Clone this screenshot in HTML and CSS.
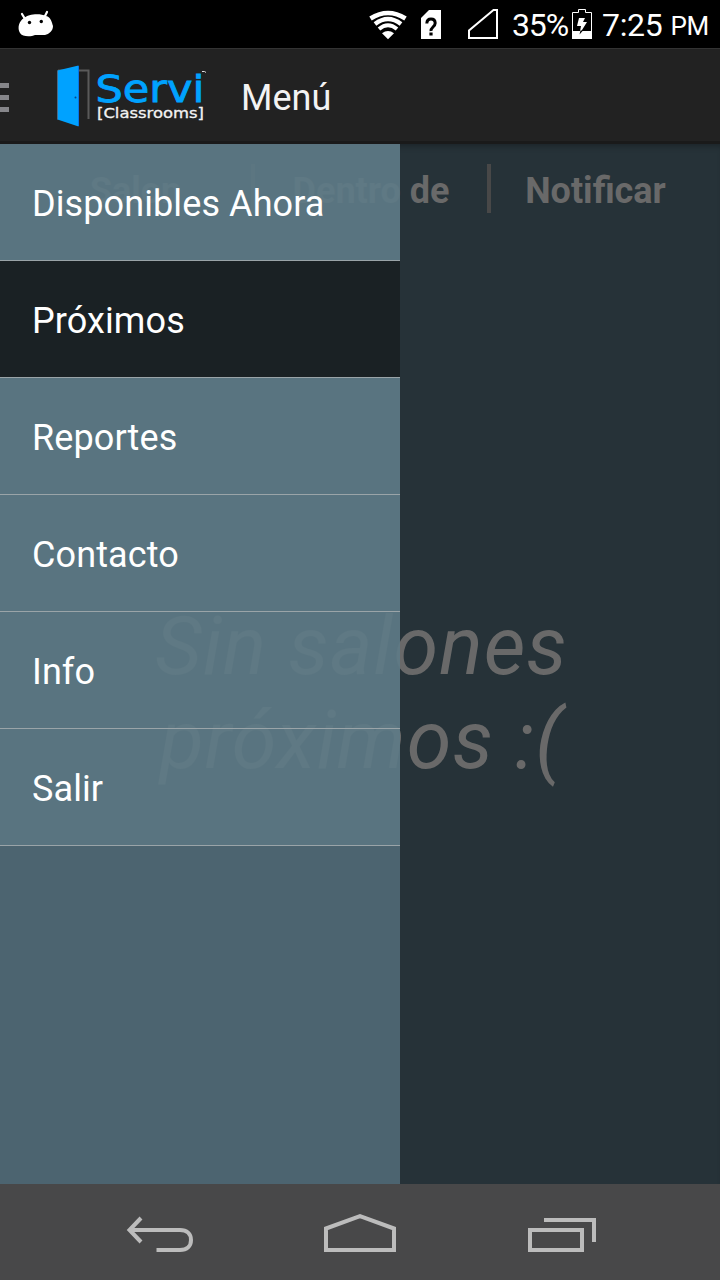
FILE: index.html
```
<!DOCTYPE html>
<html lang="es">
<head>
<meta charset="utf-8">
<title>Menú</title>
<link rel="stylesheet" href="styles.css">
</head>
<body>
<div class="screen">
  <div class="status">
    <svg class="status-icon" width="40" height="48" viewBox="0 0 40 48">
      <path d="M5 14l3 5M30 12l-3 6" stroke="#fff" stroke-width="2.2" stroke-linecap="round"/>
      <path d="M7 18C11 14 23 13 29 16C34 17 35 23 36 26C36 31 32 34 28 35L18 35C14 37 5 37 3 33C0 28 2 21 7 18Z" fill="#fff"/>
      <circle cx="12.500" cy="22.500" r="1.700"/><circle cx="24.300" cy="21.500" r="1.700"/>
    </svg>
    <div class="status-right">
      <svg class="status-icon" width="135" height="48" viewBox="0 0 135 48">
        <g fill="none" stroke="#fff" stroke-width="4.600">
          <path d="M5.500 18.500Q23 7.500 40.500 18.500"/>
          <path d="M10 24Q23 14 36 24" stroke-width="4.400"/>
          <path d="M14 29Q23 21.500 32 29" stroke-width="4"/>
        </g>
        <path d="M17 33.300Q23 28.500 29 33.300L23 39.200Z" fill="#fff"/>
        <path d="M64 10H76V39H56V18Z" fill="#fff"/>
        <path d="M61.800 23.500Q62 19 66 19T70.200 23Q70.200 25 68 27T66 31" fill="none" stroke="#000" stroke-width="3"/>
        <rect x="64.400" y="32.500" width="3.200" height="3"/>
        <path d="M104 38V30.500L128.500 10H132V38Z" fill="none" stroke="#fff" stroke-width="2"/>
      </svg>
      <span class="percent">35%</span>
      <svg class="status-icon" width="22" height="48" viewBox="0 0 22 48">
        <path d="M1.500 12.500H7.500V9.500H14.500V12.500H20.500V38.500H1.500Z" fill="none" stroke="#fff"/>
        <path d="M1 31H21V39H1Z" fill="#fff"/>
        <path d="M8 18H14L12 22H16L8.500 34L10 26H6Z" fill="#fff"/>
        <path d="M12 30.500L8.500 34.500L9.500 30.500Z" fill="#000"/>
      </svg>
      <span class="time">7:25</span><span class="pm">PM</span>
    </div>
  </div>
  <div class="bar">
    <div class="burger"><i></i><i></i><i></i></div>
    <svg class="logo" width="156" height="70" viewBox="54 62 156 70">
      <path d="M58 70.500H88.500V119" fill="none" stroke="#5a5a5a" stroke-width="2"/>
      <path d="M57.500 70.500L78.500 65.500V126.500L57.500 119.500Z" fill="#00a2ff"/>
      <path d="M57.500 70.500V119.500" stroke="#4b6b88"/>
      <path d="M78.500 66V126" stroke="#0876e8"/>
      <circle cx="75.500" cy="97.500" r="1" fill="#004990"/>
      <text class="brand" x="95.500" y="102" textLength="109" lengthAdjust="spacingAndGlyphs">Servi</text>
      <text class="brand-sub" x="97" y="118" textLength="107" lengthAdjust="spacingAndGlyphs">[Classrooms]</text>
      <path d="M202 71.500H204.500L206 72.500" fill="none" stroke="#ddd"/>
    </svg>
    <h1 class="title">Menú</h1>
  </div>
  <div class="content">
    <div class="columns">
      <span class="col">Salon</span><span class="col col-mid">Dentro de</span><span class="col">Notificar</span>
    </div>
    <p class="empty">Sin salones<br>próximos :(</p>
    <div class="drawer">
      <div class="row">Disponibles Ahora</div>
      <div class="row active">Próximos</div>
      <div class="row">Reportes</div>
      <div class="row">Contacto</div>
      <div class="row">Info</div>
      <div class="row">Salir</div>
      <div class="rest"></div>
    </div>
  </div>
  <div class="nav">
    <svg width="720" height="96" viewBox="0 1184 720 96" fill="none" stroke="#bcbcbc" stroke-width="4">
      <path d="M141 1218L129.500 1230L141 1242M129 1230H180C187 1230 191 1234 191 1240S187 1250 180 1250H156.500"/>
      <path d="M326 1250V1228.500L360 1216.200L394 1228.500V1250Z"/>
      <path d="M530 1230H582V1250H530ZM544 1220H594V1242"/>
    </svg>
  </div>
</div>
</body>
</html>
```
FILE: styles.css
```
body { margin: 0; font-family: Roboto, "Liberation Sans", sans-serif; }
.screen { width: 720px; height: 1280px; display: flex; flex-direction: column; overflow: hidden; }
.status { height: 48px; background: #000; color: #fff; display: flex; justify-content: space-between; padding: 0 11px 0 17px; }
.status-icon { display: block; flex: none; }
.status-right { display: flex; line-height: 50px; font-size: 32px; white-space: nowrap; }
.percent { width: 71px; padding-left: 12px; box-sizing: border-box; letter-spacing: -1.1px; }
.time { margin-left: 9px; letter-spacing: -.3px; }
.pm { font-size: 26px; line-height: 53px; margin-left: 8px; letter-spacing: -.3px; }
.bar { height: 96px; box-sizing: border-box; background: #222; border-top: 1px solid #333; border-bottom: 3px solid #1a1a1a; display: flex; align-items: center; }
.burger { width: 9px; display: flex; flex-direction: column; gap: 7px; margin: 5px 45px 0 0; }
.burger i { height: 5px; background: #86868a; }
.logo { display: block; margin-top: 3px; }
.brand { font: 38px "DejaVu Sans", sans-serif; fill: #00a2ff; stroke: #00a2ff; stroke-width: .8px; }
.brand-sub { font: 14px "DejaVu Sans", sans-serif; fill: #f2f2f2; stroke: #f2f2f2; stroke-width: .3px; }
.title { margin: 5px 0 0 31px; font-size: 36px; font-weight: 400; color: #f3f3f3; }
.content { height: 1040px; background: #263238; color: #696969; position: relative; box-shadow: inset 0 6px 6px -4px rgba(0,0,0,.3); }
.columns { display: grid; grid-template-columns: 251px 240px 1fr; padding-top: 20px; }
.col { height: 49px; line-height: 55px; text-align: center; font-size: 36px; font-weight: 700; padding-left: 20px; }
.col:last-child { padding: 0 20px 0 0; }
.col-mid { border: solid #484848; border-width: 0 4px; box-sizing: border-box; padding: 0; }
.empty { margin: 387px 0 0; padding-left: 3px; text-align: center; font-size: 81px; line-height: 94px; font-style: italic; letter-spacing: 1px; }
.drawer { position: absolute; inset: 0 auto 0 0; width: 400px; display: flex; flex-direction: column; box-shadow: inset 0 6px 6px -4px rgba(0,0,0,.2); }
.row { height: 117px; box-sizing: border-box; border-bottom: 1px solid #9aa4a8; background: rgba(94,122,134,.925); background-clip: padding-box; padding-left: 32px; line-height: 121px; color: #fff; font-size: 36px; letter-spacing: .1px; }
.active { background: #1a2124; background-clip: padding-box; }
.rest { flex: 1; background: #4c6470; }
.nav { height: 96px; background: #484849; }
.nav svg { display: block; }
```
